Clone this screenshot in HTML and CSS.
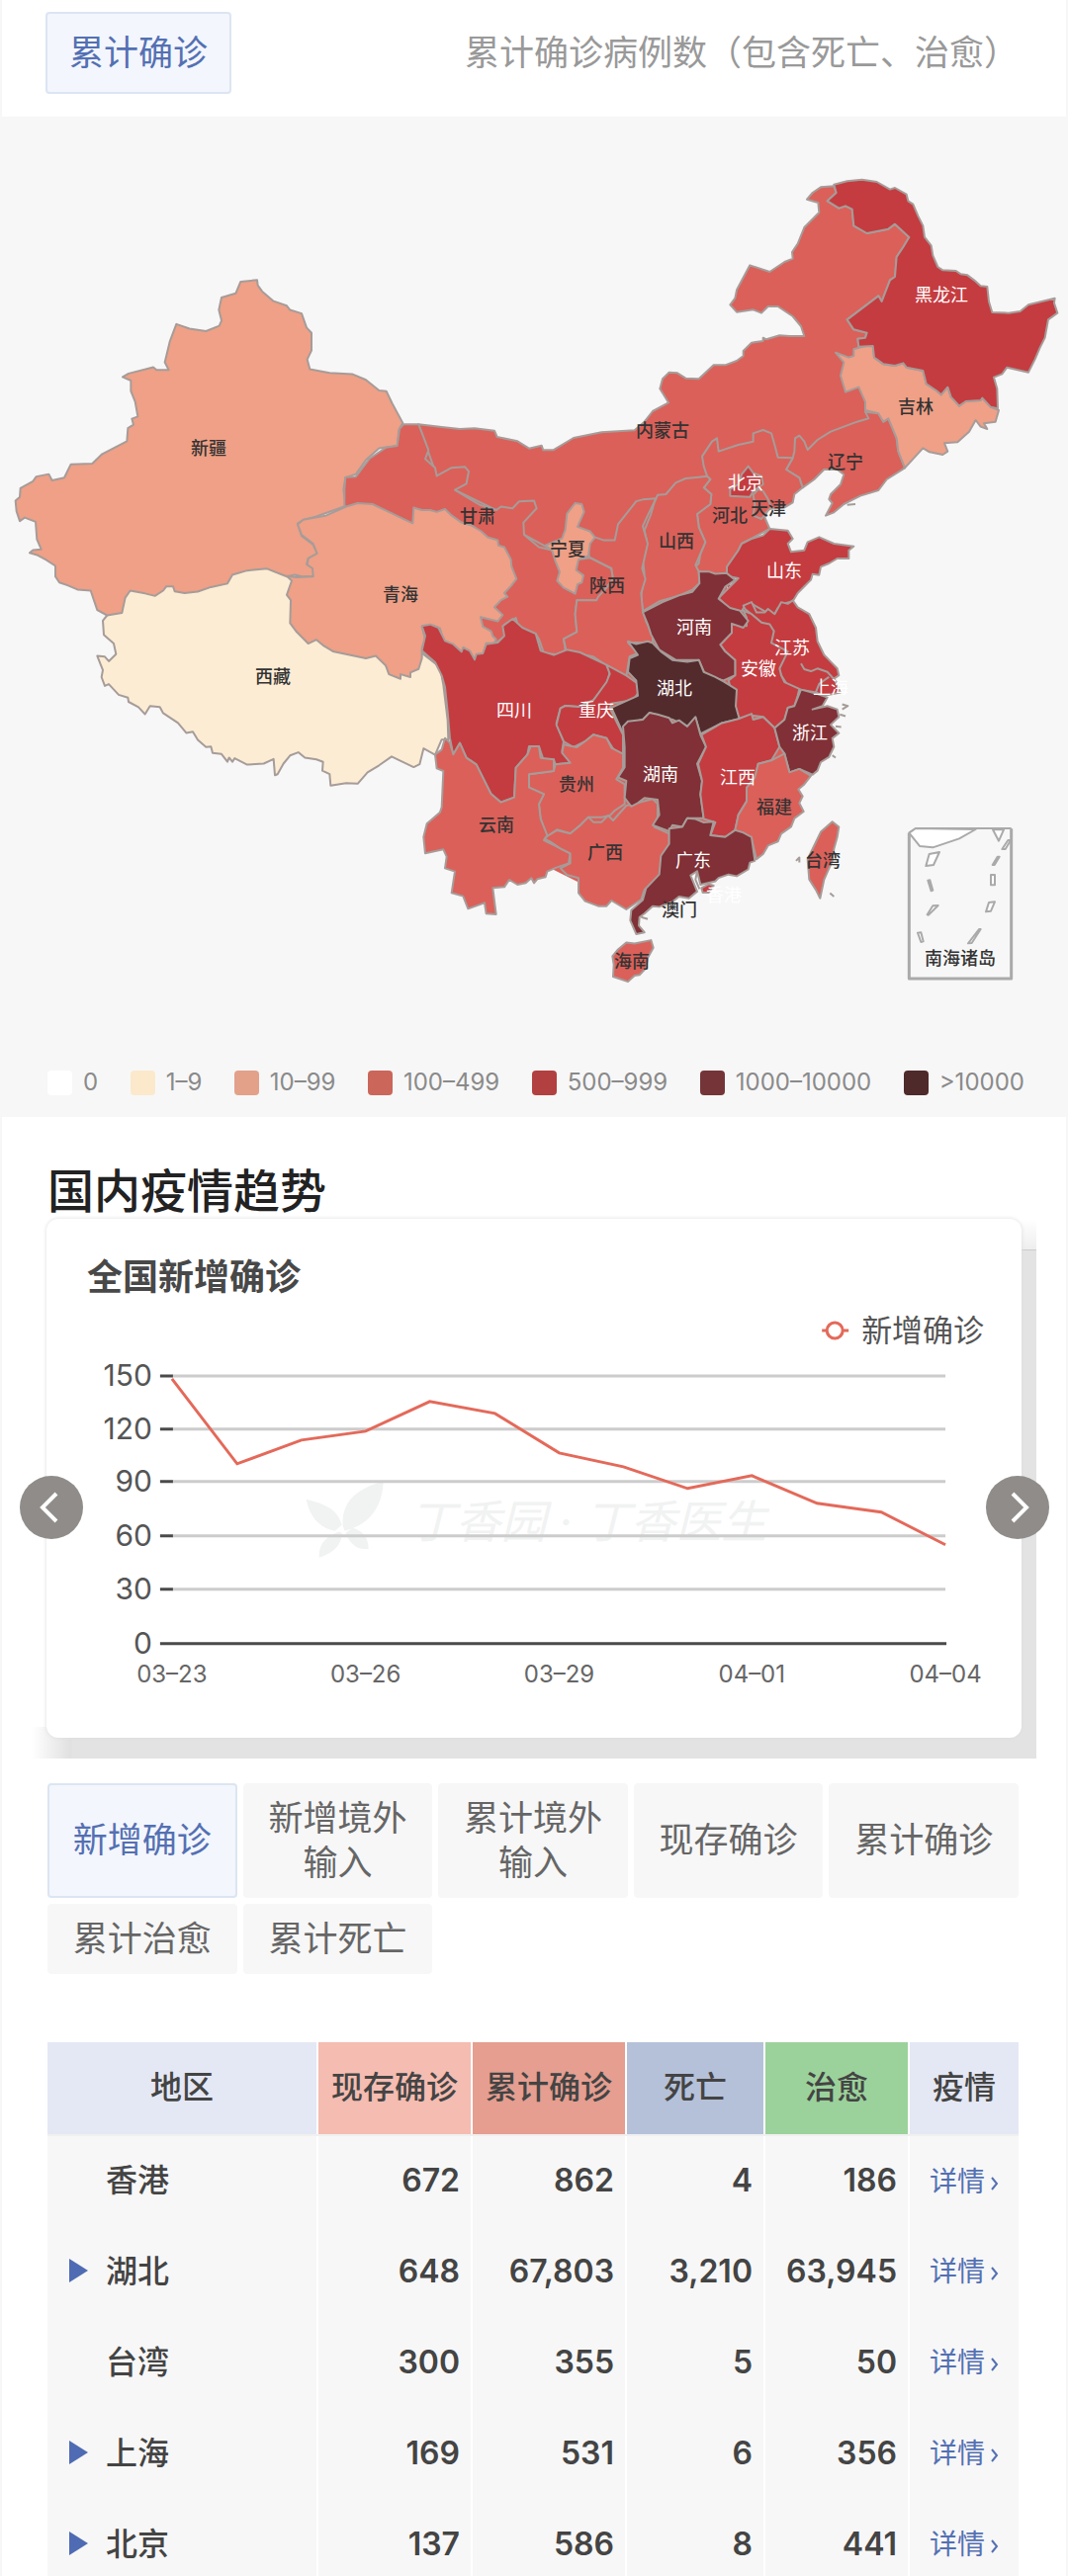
FILE: index.html
```html
<!DOCTYPE html>
<html lang="zh-CN">
<head>
<meta charset="utf-8">
<meta name="viewport" content="width=device-width, initial-scale=1">
<title>疫情地图</title>
<link rel="stylesheet" href="styles.css">
</head>
<body>
<main class="app">
  <header class="topbar">
    <button class="chip chip-active" type="button">累计确诊</button>
    <p class="topbar-note">累计确诊病例数（包含死亡、治愈）</p>
  </header>

  <section class="map-panel" aria-label="疫情地图">
    <svg class="map" viewBox="0 118 1080 940" role="img" aria-label="各省累计确诊">
      <!-- Land under the provinces, so no background shows between borders -->
      <polygon class="lv3" points="412,432 423,431 460,440 560,475 650,450 800,380 830,300 880,200 905,225 900,330 870,350 850,420 740,510 735,600 760,620 790,650 800,760 750,860 640,900 600,900 500,850 470,760 430,690 430,600 370,500"/>
      <polygon class="lv4" points="735,590 780,612 800,690 770,690 745,640"/>
      <!-- West -->
      <g transform="translate(0 260) scale(.33333 .35714)">
        <path class="lv1" d="M325,1015L312,1030 315,1070 345,1095 352,1125 330,1145 318,1132 295,1130 312,1170 308,1190 318,1215 330,1210 360,1240 388,1248 390,1260 420,1275 440,1295 455,1272 485,1275 495,1292 540,1320 565,1348 585,1345 600,1368 625,1388 640,1387 645,1405 672,1408 690,1430 695,1418 705,1430 712,1420 750,1438 800,1435 830,1422 834,1468 842,1465 860,1435 880,1412 905,1403 925,1418 960,1423 980,1430 978,1455 1000,1465 1003,1497 1050,1490 1085,1492 1115,1460 1150,1440 1188,1415 1255,1445 1273,1437 1285,1392 1320,1410 1340,1367 1360,1367 1358,1312 1345,1212 1335,1162 1280,1122 1000,1050 900,900 800,870 700,880 400,930Z"/>
        <path class="lv2" d="M325,1015L295,1000 275,945 235,942 205,930 180,922 168,905 168,875 140,858 115,845 90,838 100,830 125,828 112,800 108,750 75,738 60,748 50,720 47,690 60,680 62,655 100,635 110,622 148,615 158,633 195,625 215,587 280,585 310,558 385,522 388,485 405,475 400,458 418,452 410,410 397,380 397,350 372,340 390,330 465,312 475,320 512,320 500,298 515,240 535,190 575,203 625,210 665,195 672,180 664,150 672,115 715,103 730,70 780,65 782,80 795,97 830,125 870,138 880,150 915,160 930,200 945,215 945,265 932,290 940,318 1000,328 1070,332 1110,348 1150,378 1172,380 1190,415 1222,470 1210,490 1205,535 1150,542 1110,575 1080,615 1048,625 1042,660 1050,705 960,735 920,745 903,755 915,790 950,815 963,840 935,855 930,870 950,880 955,905 915,905 895,900 870,905 810,883 750,888 705,900 690,925 640,935 600,948 560,952 530,947 525,933 505,933 495,945 470,960 440,953 395,945 380,965 370,1008Z"/>
      </g>
      <!-- North and north-east -->
      <g transform="translate(580 160) scale(.33333)">
        <path class="lv3" d="M-470,808L-400,816 -345,822 -300,820 -240,827 -232,846 -170,859 -135,881 -97,872 -92,886 -62,886 0,849 85,832 185,826 215,800 240,768 288,742 262,700 270,670 290,650 315,652 340,668 380,670 425,628 460,628 495,615 515,600 515,585 540,560 575,555 575,545 585,550 625,538 655,540 700,540 690,510 665,480 620,450 590,450 570,470 545,460 495,467 475,445 490,425 495,400 535,325 595,345 640,315 665,305 663,285 680,260 700,210 730,180 745,165 742,135 708,125 725,105 750,88 790,85 797,105 770,130 805,152 825,145 845,155 850,205 890,228 955,215 975,200 1018,240 1000,270 980,300 975,360 960,370 935,435 925,418 830,490 850,520 890,530 885,545 862,548 865,572 900,590 900,800 780,900 665,1000 405,1000 310,1100 240,1145 140,1180 55,1200 -80,1181 -150,1143 -235,1068 -360,1007 -415,964Z"/>
        <path class="lv3" d="M885,770L895,790 860,800 820,815 780,830 740,855 710,885 700,860 685,842 672,850 670,890 665,910 645,945 685,970 695,1000 730,975 760,945 800,945 820,960 810,990 780,1020 775,1035 785,1047 765,1085 790,1075 820,1050 870,1025 925,1008 950,975 1005,940 985,890 980,850 955,790 940,800 925,775Z"/>
        <path class="line" d="M830,1052L855,1050"/>
        <path class="lv2" d="M795,590L835,605 850,600 850,580 885,570 908,570 912,605 940,625 975,630 1000,622 1010,635 1060,645 1070,685 1100,705 1115,718 1135,695 1145,725 1170,752 1190,738 1235,735 1240,728 1265,755 1290,765 1280,800 1245,805 1255,822 1235,815 1220,795 1200,830 1165,862 1125,865 1135,890 1120,900 1080,892 1060,880 1005,940 985,890 980,850 955,790 940,800 925,775 885,765 885,740 865,695 825,710 810,660 820,620Z"/>
        <path class="lv4" d="M790,80L830,70 875,65 920,72 960,95 975,90 1010,110 1015,130 1030,140 1045,175 1060,205 1065,240 1085,265 1090,295 1105,330 1120,340 1160,342 1175,352 1195,355 1215,370 1235,388 1255,390 1260,435 1270,468 1320,470 1355,465 1380,445 1420,435 1460,425 1458,440 1468,470 1440,490 1430,545 1415,575 1400,610 1380,650 1315,635 1300,655 1275,665 1285,700 1287,760 1265,755 1240,728 1235,735 1190,738 1170,752 1145,725 1135,695 1115,718 1100,705 1070,685 1060,645 1010,635 1000,622 975,630 940,625 912,605 908,570 865,572 862,548 885,545 890,530 850,520 830,490 925,418 935,435 960,370 975,360 980,300 1000,270 1018,240 975,200 955,215 890,228 850,205 845,155 825,145 805,152 770,130 797,105Z"/>
        <path class="lv3" d="M435,850L420,860 390,905 395,935 405,965 415,975 395,1000 418,1020 415,1050 375,1080 380,1120 400,1165 385,1200 380,1230 370,1240 380,1255 420,1262 460,1270 470,1240 500,1190 510,1170 595,1125 580,1090 590,1065 640,1060 665,1045 670,1020 695,1000 685,970 645,945 665,910 620,908 610,870 600,835 575,825 545,835 545,860 500,870 440,890Z"/>
        <path class="lv3" d="M545,1022L560,1005 575,1010 590,1035 600,1060 585,1075 570,1095 545,1085 550,1050Z"/>
        <path class="lv4" d="M530,935L545,955 570,965 575,990 545,1010 535,1028 475,1025 475,1005 500,990 510,960Z"/>
        <path class="lv3" d="M405,965L380,968 340,972 310,985 280,1020 255,1022 245,1045 235,1080 215,1130 222,1160 208,1200 215,1260 205,1330 210,1375 260,1345 320,1328 360,1310 382,1290 380,1255 370,1235 385,1200 400,1165 380,1120 375,1080 415,1050 418,1020 395,1000 415,975Z"/>
        <path class="lv4" d="M595,1125L650,1130 665,1155 650,1170 660,1195 700,1190 710,1165 745,1150 790,1170 850,1178 835,1190 835,1215 800,1215 775,1230 750,1240 745,1265 725,1262 720,1280 700,1300 680,1320 665,1345 645,1350 620,1365 610,1385 580,1375 540,1352 520,1358 510,1375 475,1370 440,1335 500,1275 465,1268 465,1240 500,1190 510,1170 540,1155 575,1145Z"/>
      </g>
      <!-- North-west -->
      <g transform="translate(280 400) scale(.33333 .35714)">
        <path class="lv3" d="M384,82L430,82 460,155 450,180 480,205 485,228 530,205 570,202 582,215 575,250 540,268 615,310 665,325 680,315 715,320 735,300 780,298 788,320 748,360 750,395 795,430 840,440 915,465 950,460 1015,490 1020,520 1000,545 970,580 910,580 905,620 910,670 870,690 875,720 860,735 810,730 795,690 785,675 735,665 725,630 690,650 695,680 665,700 500,600 205,312 205,265 208,232 240,230 280,180 330,148 365,143 372,95Z"/>
        <path class="lv2" d="M210,315L245,305 290,308 340,330 380,348 412,362 415,318 440,325 465,325 485,330 510,322 530,340 560,360 590,368 620,385 640,402 670,410 672,425 690,430 710,465 712,485 727,520 710,540 690,560 700,570 680,580 660,600 685,622 670,640 618,628 625,655 650,668 655,682 665,690 660,702 635,702 625,735 605,735 600,748 582,725 565,715 560,737 525,710 505,695 495,660 475,652 440,655 450,690 440,715 440,745 430,775 405,785 405,798 375,790 375,803 340,790 330,765 300,738 270,745 170,725 140,708 120,692 95,703 60,670 40,645 42,580 30,565 45,525 30,512 60,515 110,513 108,490 92,480 95,462 122,448 110,420 75,395 63,365 80,352 150,340Z"/>
        <path class="lv3" d="M1150,292L1110,295 1090,300 1035,365 1025,410 990,410 960,400 940,420 948,458 1015,490 1020,520 1000,545 975,570 970,580 910,580 905,620 910,670 870,690 878,725 960,740 1000,765 1060,795 1070,740 1095,730 1065,700 1140,700 1140,680 1120,640 1110,610 1105,560 1118,520 1108,490 1125,420 1110,370 1125,340Z"/>
        <path class="lv2" d="M905,305L925,308 932,330 912,372 950,385 965,402 950,420 945,455 915,465 908,495 930,510 925,530 912,535 905,562 870,545 850,525 858,500 845,470 835,440 815,425 865,405 875,380 880,335Z"/>
      </g>
      <!-- South-west -->
      <g transform="translate(400 580) scale(.33333)">
        <path class="lv4" d="M80,160L105,155 130,165 150,205 175,215 200,238 205,225 225,235 240,262 245,245 265,243 275,215 310,210 330,190 325,160 355,138 385,165 425,183 440,235 480,248 520,232 560,240 640,278 650,300 640,340 600,385 555,405 515,402 500,410 488,455 510,510 505,540 530,575 485,580 480,565 450,570 435,525 405,525 400,550 365,590 360,680 320,695 290,670 245,580 215,560 195,515 175,550 165,500 158,420 150,345 140,310 120,270 80,235 90,190Z"/>
        <path class="lv4" d="M640,278L700,310 735,335 735,365 720,385 655,395 650,410 690,490 690,545 670,548 640,500 600,490 575,510 540,528 510,510 488,460 500,410 515,402 555,405 600,385 640,330 650,305Z"/>
        <path class="lv3" d="M600,490L640,500 655,530 690,548 690,590 670,625 695,640 695,700 665,720 650,735 625,740 585,740 560,765 530,790 490,778 460,798 440,745 435,700 450,670 405,650 405,610 480,600 485,580 530,575 505,545 510,520 550,528 575,510Z"/>
        <path class="lv3" d="M120,550L140,535 150,500 165,515 175,550 195,515 215,560 245,580 290,670 320,695 360,680 365,590 400,550 410,525 435,525 440,560 480,565 480,600 405,610 405,650 450,670 435,700 440,745 460,795 450,810 490,830 530,850 525,880 490,892 460,905 455,922 430,928 420,940 412,925 395,940 370,945 345,930 330,952 295,955 305,1035 275,1033 270,1000 220,1018 205,980 170,970 180,905 150,895 155,860 145,838 90,850 85,800 95,760 135,725 140,710 145,600 125,592Z"/>
        <path class="lv3" d="M452,806L460,798 490,780 530,790 560,765 585,740 600,755 625,755 645,735 660,750 700,705 740,695 780,685 795,700 795,740 785,770 830,790 830,830 810,870 800,920 755,960 745,990 700,1020 655,993 640,1010 615,1010 575,995 555,970 555,925 520,915 500,895 530,880 530,850 500,835 470,815Z"/>
      </g>
      <!-- Centre and south-east -->
      <g transform="translate(580 480) scale(.33333 .34439)">
        <path class="lv4" d="M665,370L680,390 715,410 735,450 740,490 760,530 780,550 800,570 805,590 790,600 810,640 760,650 735,640 690,632 650,620 630,590 600,500 570,435 520,395 515,385 540,375 555,405 580,405 590,395 610,410 630,375 650,380Z"/>
        <path class="line" d="M690,555L700,572 720,578 740,570 770,580 800,612M735,640L745,615 775,595"/>
        <path class="lv4" d="M515,400L540,410 570,435 595,440 608,460 600,495 650,520 625,570 630,590 640,610 685,630 680,650 670,680 650,685 640,720 610,745 575,712 540,708 500,718 480,640 470,605 490,590 490,545 460,520 445,500 480,465 480,440 525,445 525,420Z"/>
        <path class="lv5" d="M380,285L410,285 430,292 465,290 490,310 460,330 440,365 475,392 505,400 530,430 515,450 480,438 480,465 445,500 460,520 490,545 490,590 455,605 400,590 380,545 310,545 260,515 235,470 225,440 210,405 270,375 320,355 360,345 382,320Z"/>
        <path class="lv6" d="M165,490L190,498 225,490 240,495 265,520 300,545 345,550 380,545 395,580 430,595 455,608 495,632 492,680 503,718 450,730 385,762 370,715 345,740 300,720 230,700 210,720 165,730 150,760 115,685 195,650 190,605 165,580 170,540 195,530Z"/>
        <path class="lv5" d="M150,740L165,725 210,720 230,700 255,705 290,715 300,730 320,722 345,740 370,712 385,765 402,800 375,850 390,900 385,940 395,1010 345,1010 330,1035 300,1030 290,1048 240,1030 260,1000 255,955 215,950 195,965 175,975 155,950 160,900 135,890 155,860 155,800Z"/>
        <path class="lv4" d="M388,765L450,730 500,718 540,703 545,720 575,712 610,745 625,800 600,840 560,850 550,890 525,920 525,960 500,1000 490,1045 460,1065 415,1060 430,1022 395,1012 385,940 390,900 378,850 402,800Z"/>
        <path class="lv5" d="M690,632L740,645 770,655 755,680 725,690 770,680 800,690 805,712 780,735 805,760 785,775 790,800 775,830 750,845 740,870 725,882 685,865 655,875 640,820 625,800 610,745 640,720 650,685 670,680Z"/>
        <path class="line" d="M815,675L832,680 815,690M808,705L825,710M795,740L812,742M785,825L795,832"/>
        <path class="lv3" d="M640,820L655,875 685,865 720,885 700,910 682,925 695,945 685,965 698,990 670,1010 660,1035 630,1055 620,1078 590,1090 575,1115 555,1130 540,1070 490,1045 500,1000 525,960 525,920 550,890 560,850 600,840Z"/>
        <path class="lv5" d="M345,1010L370,1012 395,1022 425,1020 415,1060 460,1065 490,1045 515,1052 540,1065 550,1135 535,1140 530,1160 495,1180 470,1175 440,1185 430,1195 385,1205 375,1165 355,1178 375,1225 350,1245 320,1240 300,1255 260,1270 240,1268 215,1290 200,1300 198,1325 215,1345 190,1350 172,1310 175,1280 210,1250 220,1215 260,1175 265,1120 290,1085 290,1040 330,1035Z"/>
        <path class="line" d="M375,1165L370,1190 382,1218M205,1300L225,1306"/>
        <path class="lv4" d="M388,1215L410,1203 425,1208 410,1228 392,1228Z"/>
        <path class="lv3" d="M160,1375L185,1378 235,1368 242,1390 225,1420 220,1450 200,1470 185,1472 165,1490 120,1475 122,1440 118,1415 135,1395Z"/>
        <path class="lv3" d="M785,1020L805,1035 800,1065 790,1100 785,1135 760,1190 748,1245 735,1220 715,1190 710,1130 735,1080 750,1050Z"/>
        <path class="line" d="M675,1135L685,1125 685,1140M778,1230L790,1240"/>
      </g>
      <!-- South China Sea inset -->
      <g class="inset" transform="translate(860 780) scale(.33333)">
        <path class="frame" d="M178,188L178,630H488V175"/>
        <path class="thin" d="M178,188L198,174H488"/>
        <path class="isle" d="M178,188L198,174 380,177 330,205 250,232 210,228ZM432,178L450,212 465,178ZM239,252L270,246 252,285 229,288ZM235,332L241,331 250,362 245,364ZM250,409L266,408 237,437 233,436ZM204,491L214,490 221,517 214,519ZM426,315H438V346H426ZM420,399L438,397 426,425 411,427ZM390,480L395,480 368,522 357,523ZM446,260L452,260 437,285 431,285ZM478,210L486,210 470,237 460,237Z"/>
      </g>
      <g class="names">
        <text x="211" y="452">新疆</text><text x="276" y="683">西藏</text><text x="405" y="600">青海</text>
        <text x="483" y="521">甘肃</text><text x="574" y="554">宁夏</text><text x="614" y="591">陕西</text>
        <text x="670" y="434">内蒙古</text><text x="684" y="546">山西</text><text x="738" y="520">河北</text>
        <text x="777" y="513">天津</text><text x="855" y="466">辽宁</text><text x="926" y="410">吉林</text>
        <text x="783" y="815">福建</text><text x="832" y="869">台湾</text><text x="687" y="919">澳门</text>
        <text x="639" y="971">海南</text><text x="612" y="861">广西</text><text x="583" y="792">贵州</text>
        <text x="502" y="833">云南</text><text x="971" y="968">南海诸岛</text>
      </g>
      <g class="names names-light">
        <text x="754" y="487">北京</text><text x="952" y="297">黑龙江</text><text x="793" y="576">山东</text>
        <text x="702" y="633">河南</text><text x="801" y="654">江苏</text><text x="767" y="675">安徽</text>
        <text x="682" y="695">湖北</text><text x="840" y="694">上海</text><text x="819" y="740">浙江</text>
        <text x="668" y="782">湖南</text><text x="746" y="785">江西</text><text x="701" y="869">广东</text>
        <text x="732" y="904">香港</text><text x="520" y="717">四川</text><text x="603" y="717">重庆</text>
      </g>
    </svg>
    <ul class="legend">
      <li><i class="swatch s0"></i>0</li>
      <li><i class="swatch s1"></i>1–9</li>
      <li><i class="swatch s2"></i>10–99</li>
      <li><i class="swatch s3"></i>100–499</li>
      <li><i class="swatch s4"></i>500–999</li>
      <li><i class="swatch s5"></i>1000–10000</li>
      <li><i class="swatch s6"></i>&gt;10000</li>
    </ul>
  </section>

  <section class="trend">
    <h2 class="trend-title">国内疫情趋势</h2>
    <div class="stage">
      <article class="card">
        <h3 class="card-title">全国新增确诊</h3>
        <svg class="chart" viewBox="46 1318 987 440" role="img" aria-label="新增确诊折线图">
          <g class="watermark">
            <path d="M345,1543C340,1526 328,1522 309,1517C312,1534 322,1546 338,1549ZM346,1544C344,1522 358,1506 387,1499C386,1524 374,1542 348,1549ZM342,1550C330,1554 321,1562 322,1576C338,1571 345,1562 345,1551ZM349,1551C353,1563 362,1569 372,1567C372,1556 366,1549 356,1546Z"/>
            <text x="414" y="1556">丁香园 · 丁香医生</text>
          </g>
          <path class="grid" d="M173,1392H956M173,1446H956M173,1499H956M173,1554H956M173,1608H956"/>
          <path class="axis" d="M161,1392H174M161,1446H174M161,1499H174M161,1554H174M161,1608H174M161,1663H957"/>
          <polyline class="series" points="173,1395 239,1481 304,1457 369,1448 434,1418 500,1430 565,1470 630,1484 695,1506 760,1493 826,1521 891,1530 956,1563"/>
          <g class="ylabels">
            <text x="153" y="1402">150</text><text x="153" y="1456">120</text><text x="153" y="1509">90</text>
            <text x="153" y="1564">60</text><text x="153" y="1618">30</text><text x="153" y="1673">0</text>
          </g>
          <g class="xlabels">
            <text x="173" y="1702">03–23</text><text x="369" y="1702">03–26</text><text x="565" y="1702">03–29</text>
            <text x="760" y="1702">04–01</text><text x="956" y="1702">04–04</text>
          </g>
          <path class="series" d="M831,1346H836M852,1346H858"/>
          <circle class="series" cx="844" cy="1346" r="8"/>
          <text class="series-name" x="871" y="1357">新增确诊</text>
        </svg>
      </article>
      <button class="nav nav-prev" type="button" aria-label="上一张"><svg viewBox="0 0 64 64"><path d="M37,18L23,32 37,46"/></svg></button>
      <button class="nav nav-next" type="button" aria-label="下一张"><svg viewBox="0 0 64 64"><path d="M27,18L41,32 27,46"/></svg></button>
    </div>
    <div class="tabs">
      <button class="chip chip-active" type="button">新增确诊</button>
      <button class="chip" type="button">新增境外输入</button>
      <button class="chip" type="button">累计境外输入</button>
      <button class="chip" type="button">现存确诊</button>
      <button class="chip" type="button">累计确诊</button>
      <button class="chip" type="button">累计治愈</button>
      <button class="chip" type="button">累计死亡</button>
    </div>
  </section>

  <table class="stats">
    <colgroup><col><col class="c-case"><col class="c-case"><col class="c-dead"><col class="c-cured"><col class="c-more"></colgroup>
    <thead>
      <tr><th scope="col">地区</th><th scope="col" class="h-now">现存确诊</th><th scope="col" class="h-total">累计确诊</th><th scope="col" class="h-dead">死亡</th><th scope="col" class="h-cured">治愈</th><th scope="col">疫情</th></tr>
    </thead>
    <tbody>
      <tr><th scope="row">香港</th><td>672</td><td>862</td><td>4</td><td>186</td><td class="more"><a href="#hk">详情<svg viewBox="0 0 8 16"><path d="M1,2L6,8 1,14"/></svg></a></td></tr>
      <tr><th scope="row" class="expand">湖北</th><td>648</td><td>67,803</td><td>3,210</td><td>63,945</td><td class="more"><a href="#hb">详情<svg viewBox="0 0 8 16"><path d="M1,2L6,8 1,14"/></svg></a></td></tr>
      <tr><th scope="row">台湾</th><td>300</td><td>355</td><td>5</td><td>50</td><td class="more"><a href="#tw">详情<svg viewBox="0 0 8 16"><path d="M1,2L6,8 1,14"/></svg></a></td></tr>
      <tr><th scope="row" class="expand">上海</th><td>169</td><td>531</td><td>6</td><td>356</td><td class="more"><a href="#sh">详情<svg viewBox="0 0 8 16"><path d="M1,2L6,8 1,14"/></svg></a></td></tr>
      <tr><th scope="row" class="expand">北京</th><td>137</td><td>586</td><td>8</td><td>441</td><td class="more"><a href="#bj">详情<svg viewBox="0 0 8 16"><path d="M1,2L6,8 1,14"/></svg></a></td></tr>
    </tbody>
  </table>
</main>
</body>
</html>
```
FILE: styles.css
```css
* { box-sizing: border-box; }

body {
  margin: 0;
  background: #fff;
  color: #444;
  font-family: Inter, "Noto Sans CJK SC", sans-serif;
}

h2, h3, p, ul { margin: 0; padding: 0; }

/* The app scrolls inside the window */
.app {
  height: 100vh;
  overflow-y: auto;
  scrollbar-width: none;
  border: solid #f7f7f7;
  border-width: 0 2px;
}

.topbar {
  display: flex;
  justify-content: space-between;
  align-items: center;
  padding: 12px 48px 23px 44px;
}

.topbar-note {
  color: #999;
  font-size: 35px;
  line-height: 45px;
}

.chip {
  padding: 12px 20px;
  border: 1px solid #f7f7f7;
  border-radius: 4px;
  background: #f7f7f7;
  color: #666;
  font: inherit;
  font-size: 35px;
  line-height: 45px;
}

.chip-active {
  border: 2px solid #dce5f2;
  background: #f3f6fc;
  color: #5470b3;
}

.topbar .chip { padding: 17px 22px; }

/* Map */
.map-panel {
  margin: 0 -2px;
  background: #f7f7f7;
}

.map { display: block; width: 100%; }

.map path {
  stroke: #a69c99;
  stroke-width: 2;
  stroke-linejoin: round;
  vector-effect: non-scaling-stroke;
}

.map .lv1 { fill: #fcecd3; }
.map .lv2 { fill: #efa086; }
.map .lv3 { fill: #db6059; }
.map .lv4 { fill: #c43c40; }
.map .lv5 { fill: #803036; }
.map .lv6 { fill: #532b2d; }
.map .line { fill: none; }
.map .inset path { stroke: #aaa; }
.map .inset .frame { fill: none; stroke-width: 3; }
.map .inset .thin { fill: none; }
.map .inset .isle { fill: #fff; }

.names {
  fill: #333;
  font-family: "Noto Sans CJK SC", sans-serif;
  font-size: 18px;
  font-weight: 500;
  text-anchor: middle;
  dominant-baseline: central;
}

.names-light { fill: #fff; font-weight: 400; }

.legend {
  display: flex;
  justify-content: space-between;
  padding: 20px 44px 18px 48px;
  list-style: none;
  color: #8a8a8a;
  font-size: 24px;
  line-height: 34px;
}

.legend li {
  display: flex;
  align-items: center;
  gap: 11px;
}

.swatch {
  width: 25px;
  height: 25px;
  border-radius: 4px;
}

.s0 { background: #fff; }
.s1 { background: #fce9cb; }
.s2 { background: #e3a18a; }
.s3 { background: #cb665a; }
.s4 { background: #b34040; }
.s5 { background: #753538; }
.s6 { background: #4e2a2b; }

/* Trend card */
.trend { padding-top: 46px; }

.trend-title {
  padding-left: 46px;
  color: #222;
  font-size: 47px;
  font-weight: 500;
  line-height: 57px;
}

.stage {
  position: relative;
  margin: 0 30px;
  padding: 0 15px 21px;
  background:
    linear-gradient(#fff, #eee 31px, #ccc 31px, #ccc 32px, #e3e3e3 32px) right top / 16px 100% no-repeat,
    linear-gradient(90deg, #fff, #e0e0e0 40px, #e3e3e3 41px) left bottom / 100% 32px no-repeat;
}

.card {
  border-radius: 12px;
  background: #fff;
  box-shadow: 0 0 4px #ddd;
}

.card-title {
  padding: 33px 41px 0;
  color: #484848;
  font-size: 36px;
  font-weight: 700;
  line-height: 52px;
}

.chart { display: block; width: 100%; }
.watermark { fill: #f1f2f2; }
.watermark text { font-size: 46px; font-style: italic; }
.grid { stroke: #ccc; stroke-width: 3; }
.axis { stroke: #4a4a4a; stroke-width: 3; }
.series { fill: none; stroke: #e4695a; stroke-width: 3; }
.ylabels { fill: #555; font-size: 30px; text-anchor: end; }
.xlabels { fill: #666; font-size: 24px; text-anchor: middle; }
.series-name { fill: #555; font-size: 31px; }

.nav {
  position: absolute;
  top: 260px;
  width: 64px;
  height: 64px;
  padding: 0;
  border: 0;
  border-radius: 50%;
  background: #8f8c89;
}

.nav svg { display: block; fill: none; stroke: #fff; stroke-width: 4; }
.nav-prev { left: -12px; }
.nav-next { right: -13px; }

.tabs {
  display: grid;
  grid-template-columns: repeat(5, 1fr);
  gap: 6px;
  margin: 25px 48px 0 46px;
}

/* Statistics */
.stats {
  width: calc(100% - 94px);
  margin: 69px 48px 0 46px;
  border-collapse: collapse;
  table-layout: fixed;
  font-size: 32px;
  line-height: 44px;
}

.c-case { width: 156px; }
.c-dead { width: 140px; }
.c-cured { width: 146px; }
.c-more { width: 111px; }

.stats th, .stats td {
  height: 92px;
  padding: 0 11px;
  border-right: 2px solid #fff;
  background: #f7f7f7;
  font-weight: 500;
  text-align: right;
}

.stats td { font-weight: 600; }

.stats tr > :last-child { border-right: 0; }

.stats thead th {
  height: 94px;
  padding: 0;
  border-bottom: 2px solid #f0f0f0;
  background: #e4e8f4;
  text-align: center;
}

.stats thead .h-now { background: #f5bcb1; }
.stats thead .h-total { background: #e59e90; }
.stats thead .h-dead { background: #b5c1d9; }
.stats thead .h-cured { background: #9bd29b; }

.stats tbody th {
  padding-left: 59px;
  text-align: left;
}

.stats tbody .expand { padding-left: 22px; }

.expand::before {
  content: "";
  display: inline-block;
  margin-right: 18px;
  border: solid transparent;
  border-width: 12px 0 12px 19px;
  border-left-color: #4f6bb3;
}

.stats .more { padding: 0; text-align: center; }

.more a {
  color: #5470b3;
  font-size: 28px;
  font-weight: 400;
  text-decoration: none;
}

.more svg {
  width: 8px;
  height: 16px;
  margin-left: 6px;
  fill: none;
  stroke: #5470b3;
  stroke-width: 2;
}
```
